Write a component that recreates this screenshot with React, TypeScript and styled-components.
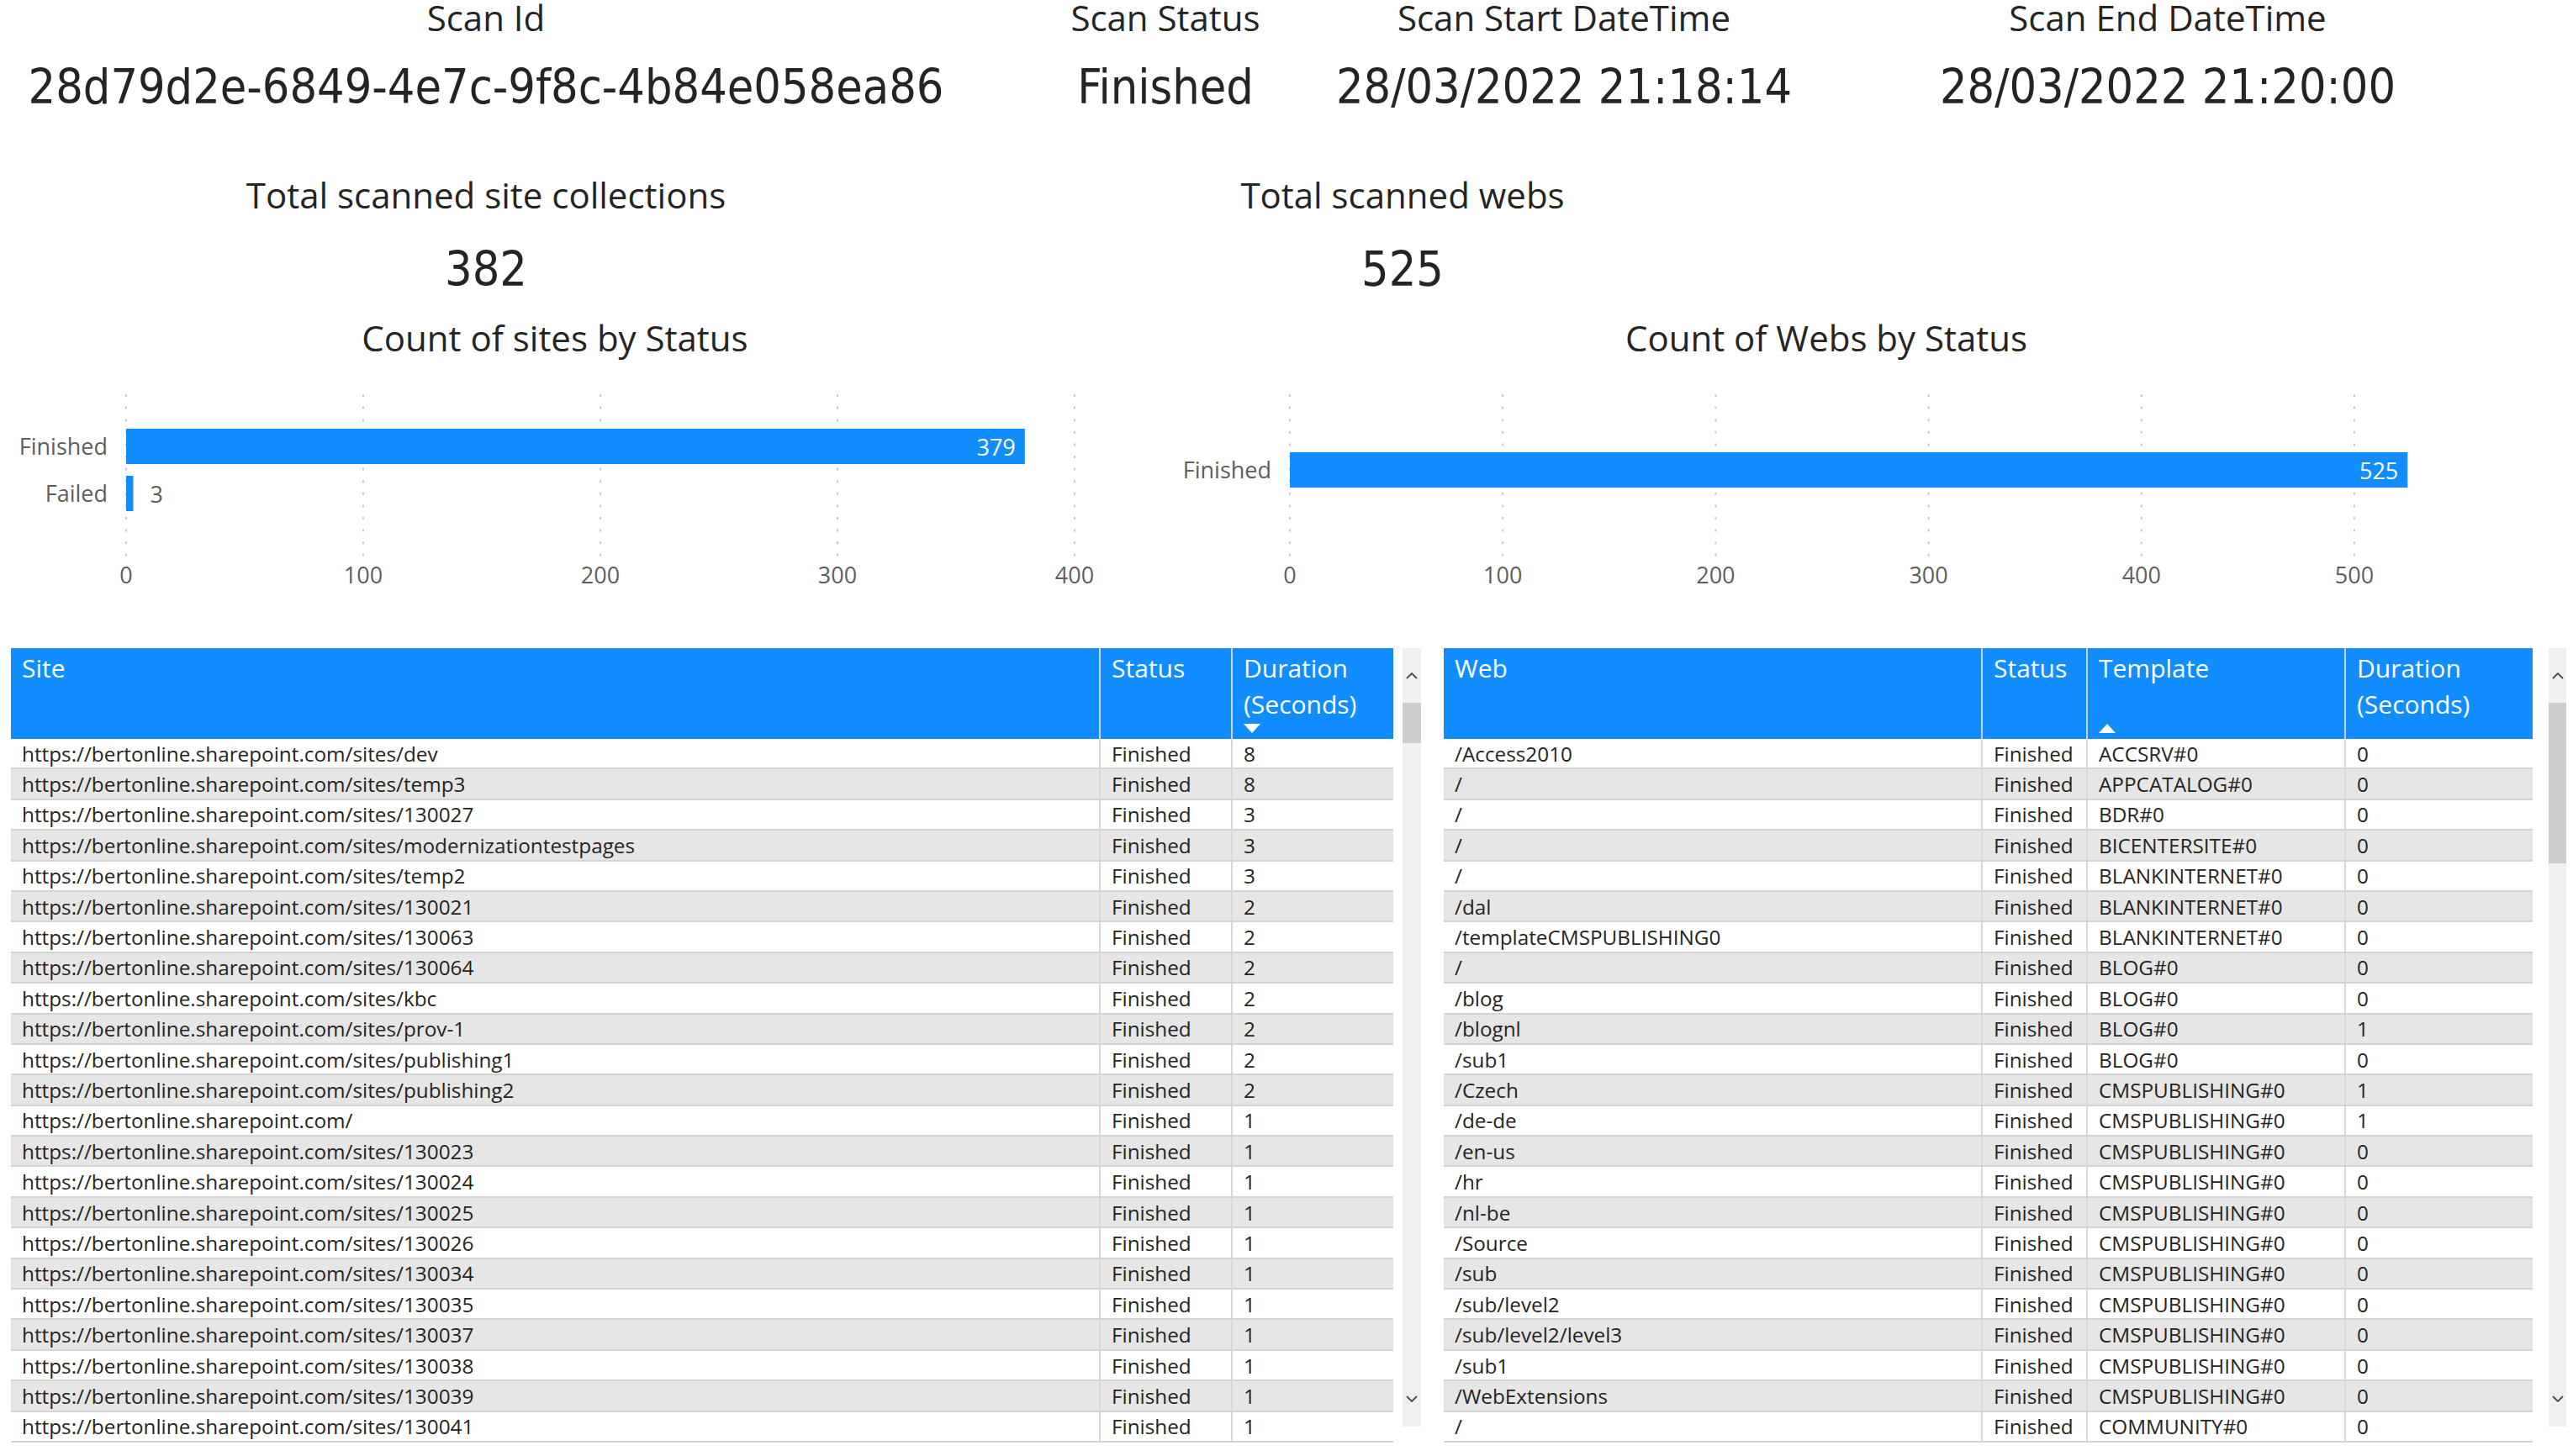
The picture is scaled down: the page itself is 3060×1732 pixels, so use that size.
import React from 'react';
import styled, { createGlobalStyle } from 'styled-components';

const blue = '#118dff';
const ink = '#252423';
const muted = '#605e5c';

const GlobalStyle = createGlobalStyle`
  html, body {
    margin: 0;
    padding: 0;
    background: #ffffff;
  }
  body {
    width: 3060px;
    height: 1732px;
    overflow: hidden;
    font-family: 'Open Sans', 'Noto Sans', sans-serif;
    color: ${ink};
  }
`;

const Page = styled.div`
  width: 3060px;
  height: 1732px;
  display: flex;
  flex-direction: column;
`;

const SummaryRow = styled.div<{ $cols: string; $pad: number; $height: number }>`
  display: grid;
  grid-template-columns: ${(p) => p.$cols};
  padding-top: ${(p) => p.$pad}px;
  height: ${(p) => p.$height}px;
  box-sizing: border-box;
`;

const Card = styled.div<{ $gap: number }>`
  display: flex;
  flex-direction: column;
  align-items: center;
  gap: ${(p) => p.$gap}px;
`;

const CardLabel = styled.div`
  font-size: 42px;
  line-height: 46px;
  margin-top: -2px;
  margin-bottom: -2px;
  white-space: nowrap;
`;

const CardValue = styled.div`
  font-family: 'DejaVu Sans Condensed', 'DejaVu Sans', sans-serif;
  font-stretch: condensed;
  font-size: 57px;
  line-height: 70px;
  white-space: nowrap;
`;

const ChartsRow = styled.div`
  display: flex;
  gap: 20px;
  padding-top: 26px;
`;

const ChartPanel = styled.div<{ $width: number }>`
  width: ${(p) => p.$width}px;
  display: flex;
  flex-direction: column;
  align-items: center;
`;

const ChartTitle = styled.div`
  font-size: 42px;
  line-height: 42px;
  white-space: nowrap;
`;

const ChartSvg = styled.svg`
  display: block;
  font-family: 'Open Sans', 'Noto Sans', sans-serif;
`;

const TablesRow = styled.div`
  display: flex;
  align-items: flex-start;
  margin-top: 48px;
  padding-left: 13px;
`;

const Table = styled.div<{ $width: number; $gapLeft?: number }>`
  width: ${(p) => p.$width}px;
  margin-left: ${(p) => p.$gapLeft ?? 0}px;
  flex: none;
`;

const HeaderRow = styled.div<{ $cols: string }>`
  display: grid;
  grid-template-columns: ${(p) => p.$cols};
  height: 108px;
  background: ${blue};
  color: #ffffff;
  font-size: 30px;
  line-height: 43px;
`;

const HeaderCell = styled.div`
  display: flex;
  flex-direction: column;
  justify-content: space-between;
  align-items: flex-start;
  padding: 2px 13px 7px;
  overflow: hidden;

  & + & {
    border-left: 2px solid #c9d5e2;
  }
`;

const SortArrow = styled.div<{ $up?: boolean }>`
  width: 0;
  height: 0;
  border-left: 10px solid transparent;
  border-right: 10px solid transparent;
  ${(p) => (p.$up ? 'border-bottom: 11px solid #ffffff;' : 'border-top: 11px solid #ffffff;')}
`;

const BodyRow = styled.div<{ $cols: string; $alt: boolean }>`
  display: grid;
  grid-template-columns: ${(p) => p.$cols};
  height: 36.4px;
  box-sizing: border-box;
  border-bottom: 2px solid #d3d3d3;
  background: ${(p) => (p.$alt ? '#e6e6e6' : '#ffffff')};
  font-size: 24.3px;
  color: ${ink};
`;

const Cell = styled.div`
  display: flex;
  align-items: center;
  padding: 0 13px;
  white-space: nowrap;
  overflow: hidden;

  & + & {
    border-left: 2px solid #d9d9d9;
  }
`;

const Scrollbar = styled.div<{ $width: number; $gapLeft: number }>`
  width: ${(p) => p.$width}px;
  margin-left: ${(p) => p.$gapLeft}px;
  height: 926px;
  background: #f0f0f0;
  display: flex;
  flex-direction: column;
  flex: none;
`;

const ScrollButton = styled.div`
  height: 65px;
  display: flex;
  align-items: center;
  justify-content: center;
  flex: none;
`;

const Thumb = styled.div<{ $height: number }>`
  height: ${(p) => p.$height}px;
  background: #cdcdcd;
  flex: none;
`;

const TrackRest = styled.div`
  flex: 1;
`;

const Chevron = ({ up }: { up?: boolean }) => (
  <svg width="14" height="9" viewBox="0 0 14 9">
    <polyline
      points={up ? '1,8 7,2 13,8' : '1,1 7,7 13,1'}
      fill="none"
      stroke="#4a4a4a"
      strokeWidth="1.8"
    />
  </svg>
);

type Bar = { label: string; value: number; y: number };

const BarChart = ({
  width,
  plotX,
  unit,
  ticks,
  bars,
}: {
  width: number;
  plotX: number;
  unit: number;
  ticks: number[];
  bars: Bar[];
}) => (
  <ChartSvg width={width} height={300}>
    {ticks.map((t) => (
      <line
        key={'g' + t}
        x1={plotX + t * unit}
        x2={plotX + t * unit}
        y1={46}
        y2={240}
        stroke="#c8c8c8"
        strokeWidth={2}
        strokeDasharray="3 11.6"
      />
    ))}
    {bars.map((b) => {
      const w = b.value * unit;
      const end = plotX + w;
      const inside = w > 80;
      return (
        <g key={b.label}>
          <rect x={plotX} y={b.y} width={w} height={42} fill={blue} />
          <text x={plotX - 22} y={b.y + 20} textAnchor="end" dominantBaseline="central" fill={muted} fontSize={27}>
            {b.label}
          </text>
          <text
            x={inside ? end - 11 : end + 20}
            y={b.y + 21}
            textAnchor={inside ? 'end' : 'start'}
            dominantBaseline="central"
            fill={inside ? '#ffffff' : muted}
            fontSize={27}
          >
            {b.value}
          </text>
        </g>
      );
    })}
    {ticks.map((t) => (
      <text key={'t' + t} x={plotX + t * unit} y={260} textAnchor="middle" dominantBaseline="central" fill={muted} fontSize={27}>
        {t}
      </text>
    ))}
  </ChartSvg>
);

const base = 'https://bertonline.sharepoint.com/';

const sites: [string, string, number][] = [
  [base + 'sites/dev', 'Finished', 8],
  [base + 'sites/temp3', 'Finished', 8],
  [base + 'sites/130027', 'Finished', 3],
  [base + 'sites/modernizationtestpages', 'Finished', 3],
  [base + 'sites/temp2', 'Finished', 3],
  [base + 'sites/130021', 'Finished', 2],
  [base + 'sites/130063', 'Finished', 2],
  [base + 'sites/130064', 'Finished', 2],
  [base + 'sites/kbc', 'Finished', 2],
  [base + 'sites/prov-1', 'Finished', 2],
  [base + 'sites/publishing1', 'Finished', 2],
  [base + 'sites/publishing2', 'Finished', 2],
  [base, 'Finished', 1],
  [base + 'sites/130023', 'Finished', 1],
  [base + 'sites/130024', 'Finished', 1],
  [base + 'sites/130025', 'Finished', 1],
  [base + 'sites/130026', 'Finished', 1],
  [base + 'sites/130034', 'Finished', 1],
  [base + 'sites/130035', 'Finished', 1],
  [base + 'sites/130037', 'Finished', 1],
  [base + 'sites/130038', 'Finished', 1],
  [base + 'sites/130039', 'Finished', 1],
  [base + 'sites/130041', 'Finished', 1],
];

const webs: [string, string, string, number][] = [
  ['/Access2010', 'Finished', 'ACCSRV#0', 0],
  ['/', 'Finished', 'APPCATALOG#0', 0],
  ['/', 'Finished', 'BDR#0', 0],
  ['/', 'Finished', 'BICENTERSITE#0', 0],
  ['/', 'Finished', 'BLANKINTERNET#0', 0],
  ['/dal', 'Finished', 'BLANKINTERNET#0', 0],
  ['/templateCMSPUBLISHING0', 'Finished', 'BLANKINTERNET#0', 0],
  ['/', 'Finished', 'BLOG#0', 0],
  ['/blog', 'Finished', 'BLOG#0', 0],
  ['/blognl', 'Finished', 'BLOG#0', 1],
  ['/sub1', 'Finished', 'BLOG#0', 0],
  ['/Czech', 'Finished', 'CMSPUBLISHING#0', 1],
  ['/de-de', 'Finished', 'CMSPUBLISHING#0', 1],
  ['/en-us', 'Finished', 'CMSPUBLISHING#0', 0],
  ['/hr', 'Finished', 'CMSPUBLISHING#0', 0],
  ['/nl-be', 'Finished', 'CMSPUBLISHING#0', 0],
  ['/Source', 'Finished', 'CMSPUBLISHING#0', 0],
  ['/sub', 'Finished', 'CMSPUBLISHING#0', 0],
  ['/sub/level2', 'Finished', 'CMSPUBLISHING#0', 0],
  ['/sub/level2/level3', 'Finished', 'CMSPUBLISHING#0', 0],
  ['/sub1', 'Finished', 'CMSPUBLISHING#0', 0],
  ['/WebExtensions', 'Finished', 'CMSPUBLISHING#0', 0],
  ['/', 'Finished', 'COMMUNITY#0', 0],
];

const siteCols = '1294px 157px 193px';
const webCols = '639px 125px 307px 224px';

export default function App() {
  return (
    <Page>
      <GlobalStyle />
      <SummaryRow $cols="1156px 460px 488px 948px" $pad={0} $height={190}>
        <Card $gap={26}>
          <CardLabel>Scan Id</CardLabel>
          <CardValue>28d79d2e-6849-4e7c-9f8c-4b84e058ea86</CardValue>
        </Card>
        <Card $gap={26}>
          <CardLabel>Scan Status</CardLabel>
          <CardValue>Finished</CardValue>
        </Card>
        <Card $gap={26}>
          <CardLabel>Scan Start DateTime</CardLabel>
          <CardValue>28/03/2022 21:18:14</CardValue>
        </Card>
        <Card $gap={26}>
          <CardLabel>Scan End DateTime</CardLabel>
          <CardValue>28/03/2022 21:20:00</CardValue>
        </Card>
      </SummaryRow>

      <SummaryRow $cols="1156px 1024px" $pad={21} $height={165}>
        <Card $gap={32}>
          <CardLabel>Total scanned site collections</CardLabel>
          <CardValue>382</CardValue>
        </Card>
        <Card $gap={32}>
          <CardLabel>Total scanned webs</CardLabel>
          <CardValue>525</CardValue>
        </Card>
      </SummaryRow>

      <ChartsRow>
        <ChartPanel $width={1320}>
          <ChartTitle>Count of sites by Status</ChartTitle>
          <BarChart
            width={1320}
            plotX={150}
            unit={2.82}
            ticks={[0, 100, 200, 300, 400]}
            bars={[
              { label: 'Finished', value: 379, y: 87 },
              { label: 'Failed', value: 3, y: 143 },
            ]}
          />
        </ChartPanel>
        <ChartPanel $width={1664}>
          <ChartTitle>Count of Webs by Status</ChartTitle>
          <BarChart
            width={1664}
            plotX={194}
            unit={2.532}
            ticks={[0, 100, 200, 300, 400, 500]}
            bars={[{ label: 'Finished', value: 525, y: 115 }]}
          />
        </ChartPanel>
      </ChartsRow>

      <TablesRow>
        <Table $width={1644}>
          <HeaderRow $cols={siteCols}>
            <HeaderCell>Site</HeaderCell>
            <HeaderCell>Status</HeaderCell>
            <HeaderCell>
              <span>Duration (Seconds)</span>
              <SortArrow />
            </HeaderCell>
          </HeaderRow>
          {sites.map(([site, status, dur], i) => (
            <BodyRow key={i} $cols={siteCols} $alt={i % 2 === 1}>
              <Cell>{site}</Cell>
              <Cell>{status}</Cell>
              <Cell>{dur}</Cell>
            </BodyRow>
          ))}
        </Table>
        <Scrollbar $width={22} $gapLeft={11}>
          <ScrollButton>
            <Chevron up />
          </ScrollButton>
          <Thumb $height={48} />
          <TrackRest />
          <ScrollButton>
            <Chevron />
          </ScrollButton>
        </Scrollbar>

        <Table $width={1295} $gapLeft={27}>
          <HeaderRow $cols={webCols}>
            <HeaderCell>Web</HeaderCell>
            <HeaderCell>Status</HeaderCell>
            <HeaderCell>
              <span>Template</span>
              <SortArrow $up />
            </HeaderCell>
            <HeaderCell>Duration (Seconds)</HeaderCell>
          </HeaderRow>
          {webs.map(([web, status, template, dur], i) => (
            <BodyRow key={i} $cols={webCols} $alt={i % 2 === 1}>
              <Cell>{web}</Cell>
              <Cell>{status}</Cell>
              <Cell>{template}</Cell>
              <Cell>{dur}</Cell>
            </BodyRow>
          ))}
        </Table>
        <Scrollbar $width={21} $gapLeft={19}>
          <ScrollButton>
            <Chevron up />
          </ScrollButton>
          <Thumb $height={191} />
          <TrackRest />
          <ScrollButton>
            <Chevron />
          </ScrollButton>
        </Scrollbar>
      </TablesRow>
    </Page>
  );
}
